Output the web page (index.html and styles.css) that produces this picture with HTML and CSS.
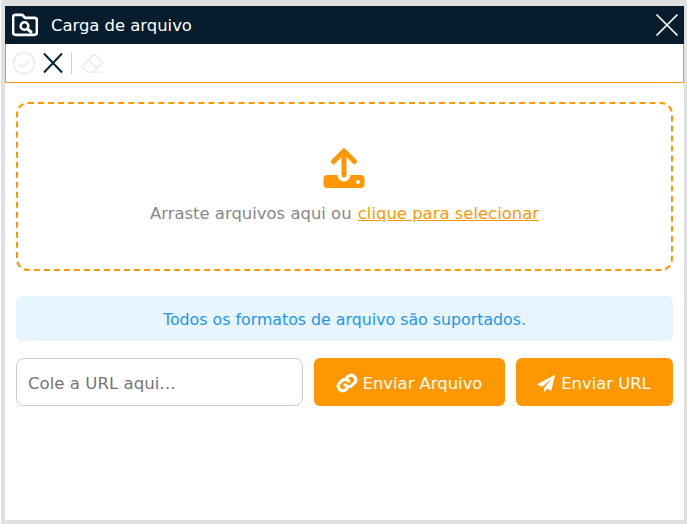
FILE: index.html
```html
<!DOCTYPE html>
<html lang="pt">
<head>
<meta charset="utf-8">
<title>Carga de arquivo</title>
<link rel="stylesheet" href="styles.css">
</head>
<body>
<div class="window">
  <header class="titlebar">
    <svg class="title-icon" viewBox="0 0 26 24" width="26" height="24"><path d="M3.500 1.800h6.500l3 3h9.500a2.500 2.500 0 0 1 2.500 2.500v12a2.500 2.500 0 0 1-2.500 2.500h-19A2.500 2.500 0 0 1 1 19.300V4.300A2.500 2.500 0 0 1 3.500 1.800z" fill="none" stroke="#fff" stroke-width="2.800" stroke-linejoin="round"/><circle cx="12.500" cy="13" r="3.800" fill="none" stroke="#fff" stroke-width="2.600"/><path d="M15.500 16l3.500 3" stroke="#fff" stroke-width="3" stroke-linecap="round"/></svg>
    <span class="title-text">Carga de arquivo</span>
    <svg class="title-close" viewBox="0 0 24 24" width="24" height="24"><path d="M1.500 1.500l21 21M22.500 1.500l-21 21" stroke="#fff" stroke-width="1.700" fill="none"/></svg>
  </header>
  <div class="toolbar">
    <svg class="tool" viewBox="0 0 24 24" width="24" height="24"><circle cx="12" cy="12" r="10.500" fill="none" stroke="#e9eaea" stroke-width="1.500"/><path d="M7 12.500l3.500 3.500 6.500-7" fill="none" stroke="#e9eaea" stroke-width="1.500"/></svg>
    <svg class="tool" viewBox="0 0 24 24" width="24" height="24"><path d="M3 2.500l18 19M21 2.500l-18 19" stroke="#06263b" stroke-width="2" fill="none"/></svg>
    <span class="tool-sep"></span>
    <svg class="tool tool-eraser" viewBox="0 0 24 24" width="24" height="24"><path d="M1.500 15L12 3.500a2 2 0 0 1 2.800 0l7 6a2 2 0 0 1 0 2.800L12.500 21H7.500L1.500 16zM7.500 8.500L16.500 17M7.500 21H23" fill="none" stroke="#e9eaea" stroke-width="1.500" stroke-linejoin="round"/></svg>
  </div>
  <main class="content">
    <section class="dropzone">
      <svg class="upload" viewBox="0 0 42 42" width="42" height="42"><path d="M21 4L10.500 14.500M21 4l10.500 10.500M21 4v24" fill="none" stroke="#ff9800" stroke-width="5" stroke-linecap="round" stroke-linejoin="round"/><path d="M4.500 29h10a6.500 6.500 0 0 0 13 0h10a4 4 0 0 1 4 4v5a4 4 0 0 1-4 4h-33a4 4 0 0 1-4-4v-5a4 4 0 0 1 4-4z" transform="translate(0 -1)" fill="#ff9800"/><circle cx="35" cy="35" r="2" fill="#fff"/></svg>
      <p class="drop-text">Arraste arquivos aqui ou <a class="drop-link" href="#">clique para selecionar</a></p>
    </section>
    <div class="info">Todos os formatos de arquivo são suportados.</div>
    <div class="url-row">
      <input class="url-input" type="text" placeholder="Cole a URL aqui…">
      <button class="btn btn-file"><svg viewBox="0 0 24 24" width="22" height="22"><path d="M10 14a5 5 0 0 0 7.500.5l3-3a5 5 0 0 0-7-7l-1.700 1.700M14 10a5 5 0 0 0-7.500-.5l-3 3a5 5 0 0 0 7 7l1.700-1.700" fill="none" stroke="#fff" stroke-width="3.400" stroke-linecap="round"/></svg>Enviar Arquivo</button>
      <button class="btn btn-url"><svg viewBox="0 0 24 24" width="19" height="19"><path d="M23 1L0 13l6.500 3L19 6 9 17.500V23l4-4.500 5 2.500z" fill="#fff"/></svg>Enviar URL</button>
    </div>
  </main>
</div>
</body>
</html>
```
FILE: styles.css
```css
html, body { margin: 0; padding: 0; background: #fff; }
body { font-family: "DejaVu Sans", sans-serif; height: 526px; overflow: hidden; }
.window {
  box-sizing: border-box;
  width: 686px;
  height: 524px;
  margin-left: 1px;
  border: solid #e0e0e0;
  border-width: 6px 3px 4px 4px;
  background: #fff;
}
.titlebar {
  display: flex;
  align-items: center;
  height: 38px;
  background: #071d2e;
  color: #fff;
  padding: 0 5px 0 7px;
}
.title-icon { flex: none; }
.title-text { margin-left: 13px; font-size: 16.4px; flex: 1; }
.toolbar {
  box-sizing: border-box;
  display: flex;
  align-items: center;
  height: 39px;
  padding: 0 6px;
  gap: 5px;
  border: 1px solid #ff9800;
  border-top: 0;
}
.tool { flex: none; }
.tool-sep { width: 1px; height: 22px; margin-left: 1px; background: #f5c6b8; }
.tool-eraser { margin-left: 4px; width: 23px; height: 23px; }
.content { padding: 19px 11px 0; }
.dropzone {
  box-sizing: border-box;
  height: 169px;
  border: 2px dashed #ff9800;
  border-radius: 12px;
  display: flex;
  flex-direction: column;
  align-items: center;
  padding-top: 43px;
}
.upload { flex: none; margin-left: -1px; }
.drop-text { margin: 15px 0 0; font-size: 16.45px; color: #888; }
.drop-link { color: #ff9800; text-decoration: underline; margin-left: 1px; }
.info {
  margin-top: 25px;
  height: 45px;
  line-height: 47px;
  background: #e8f5fe;
  border-radius: 6px;
  text-align: center;
  color: #2196f3;
  font-size: 15.8px;
}
.url-row { display: flex; margin-top: 17px; height: 48px; }
.url-input {
  box-sizing: border-box;
  width: 287px;
  height: 48px;
  border: 1px solid #ccc;
  border-radius: 8px;
  padding: 2px 11px 0;
  font: 16.6px "DejaVu Sans", sans-serif;
  outline: none;
}
.url-input::placeholder { color: #757575; opacity: 1; }
.btn {
  display: flex;
  align-items: center;
  justify-content: center;
  gap: 5px;
  height: 48px;
  margin-left: 11px;
  border: 0;
  border-radius: 6px;
  background: #ff9800;
  color: #fff;
  font: 16.4px "DejaVu Sans", sans-serif;
  padding: 2px 1px 0 0;
}
.btn-file { width: 191px; }
.btn-url { width: 157px; }
```
